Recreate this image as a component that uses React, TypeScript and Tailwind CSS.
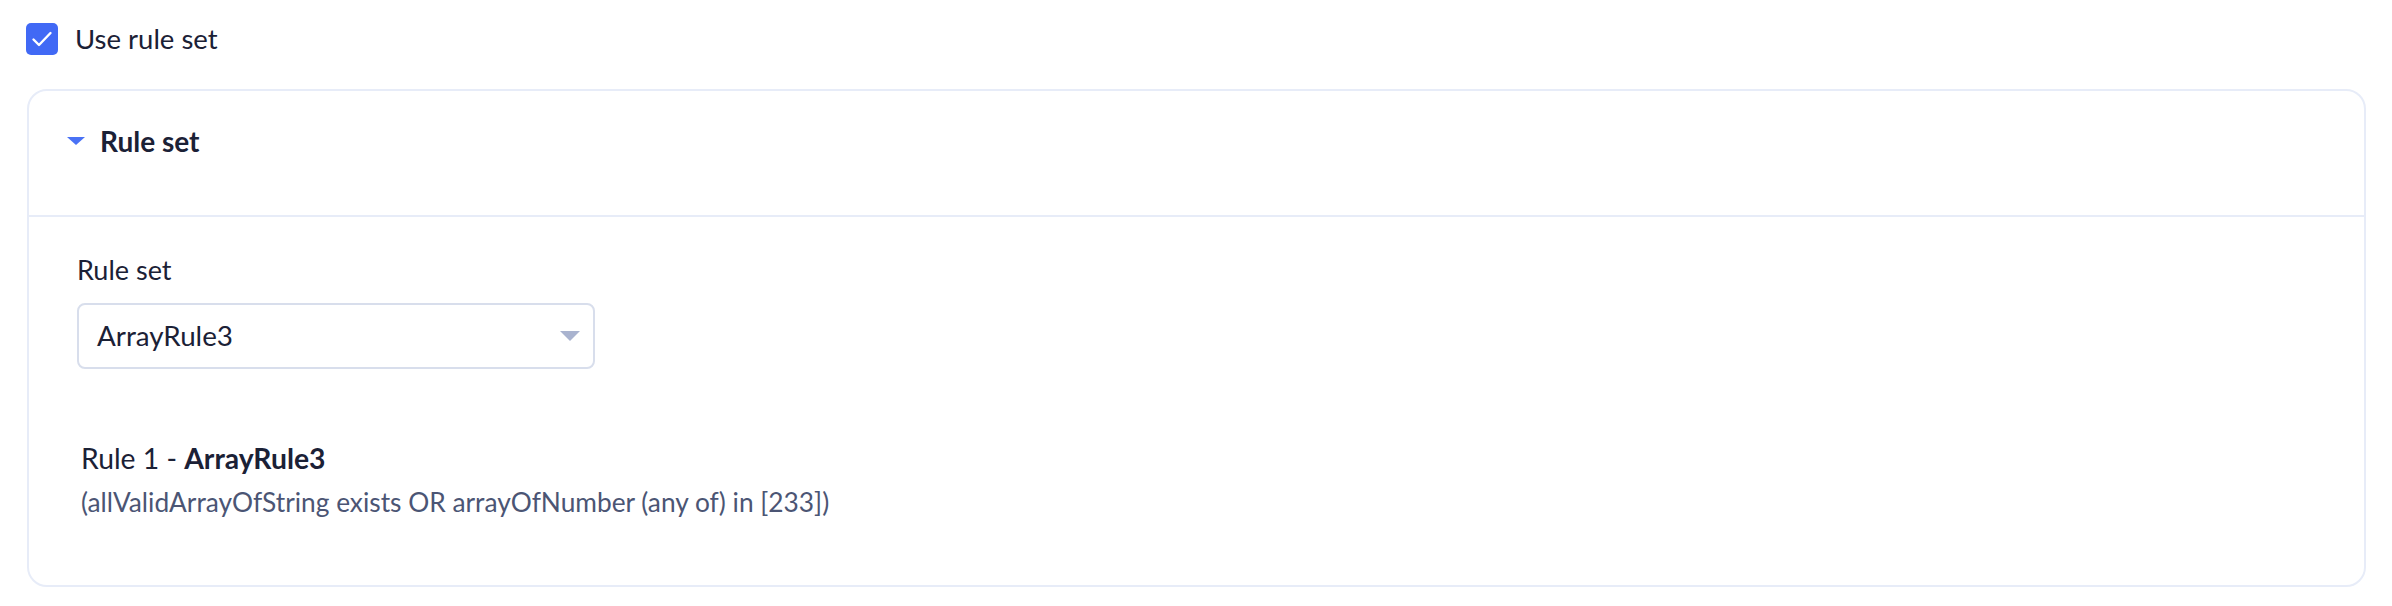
import React from "react";

const font = { fontFamily: "Lato, 'Noto Sans', sans-serif" };

function CheckIcon() {
  return (
    <svg viewBox="0 0 32 32" className="w-[32px] h-[32px]">
      <path d="M7.5 16.5 L13 22 L24.5 10" fill="none" stroke="#ffffff" strokeWidth="2.4" strokeLinecap="round" strokeLinejoin="round" />
    </svg>
  );
}

export default function App() {
  return (
    <div className="min-h-[606px] bg-white text-[#1b2136] px-[26px] pt-[23px] pb-[19px]" style={font}>
      {/* Use rule set toggle */}
      <label className="flex items-center gap-[17px] h-[32px]">
        <span className="w-[32px] h-[32px] rounded-[5px] bg-[#4169f5] flex items-center justify-center">
          <CheckIcon />
        </span>
        <span className="text-[27.5px] leading-[36px]">Use rule set</span>
      </label>

      {/* Rule set card */}
      <div className="mt-[34px] ml-[1px] border-2 border-[#e7ecf8] rounded-[20px]">
        <div className="h-[126px] border-b-2 border-[#e7ecf8] pl-[38px] pt-[30px]">
          <div className="flex items-center h-[40px] gap-[15px]">
            <svg viewBox="0 0 18 8" className="w-[18px] h-[8px]">
              <path d="M0 0 H18 L9 8 Z" fill="#4a72f5" />
            </svg>
            <span className="text-[28px] leading-[40px] font-bold">Rule set</span>
          </div>
        </div>

        <div className="pl-[48px] pt-[35px] pb-[65px]">
          <div className="text-[27px] leading-[36px]">Rule set</div>
          <div className="mt-[15px] w-[518px] h-[66px] border-2 border-[#d8deec] rounded-[8px] flex items-center justify-between pl-[18px] pr-[13px]">
            <span className="text-[27.8px] leading-[36px]">ArrayRule3</span>
            <svg viewBox="0 0 20 10" className="w-[20px] h-[10px]">
              <path d="M0 0 H20 L10 10 Z" fill="#a9b3cf" />
            </svg>
          </div>

          <div className="mt-[71px] pl-[4px]">
            <div className="text-[28.3px] leading-[36px]">
              Rule 1 - <span className="font-bold">ArrayRule3</span>
            </div>
            <div className="mt-[8px] text-[26.3px] leading-[36px] text-[#4b5574]">
              (allValidArrayOfString exists OR arrayOfNumber (any of) in [233])
            </div>
          </div>
        </div>
      </div>
    </div>
  );
}
